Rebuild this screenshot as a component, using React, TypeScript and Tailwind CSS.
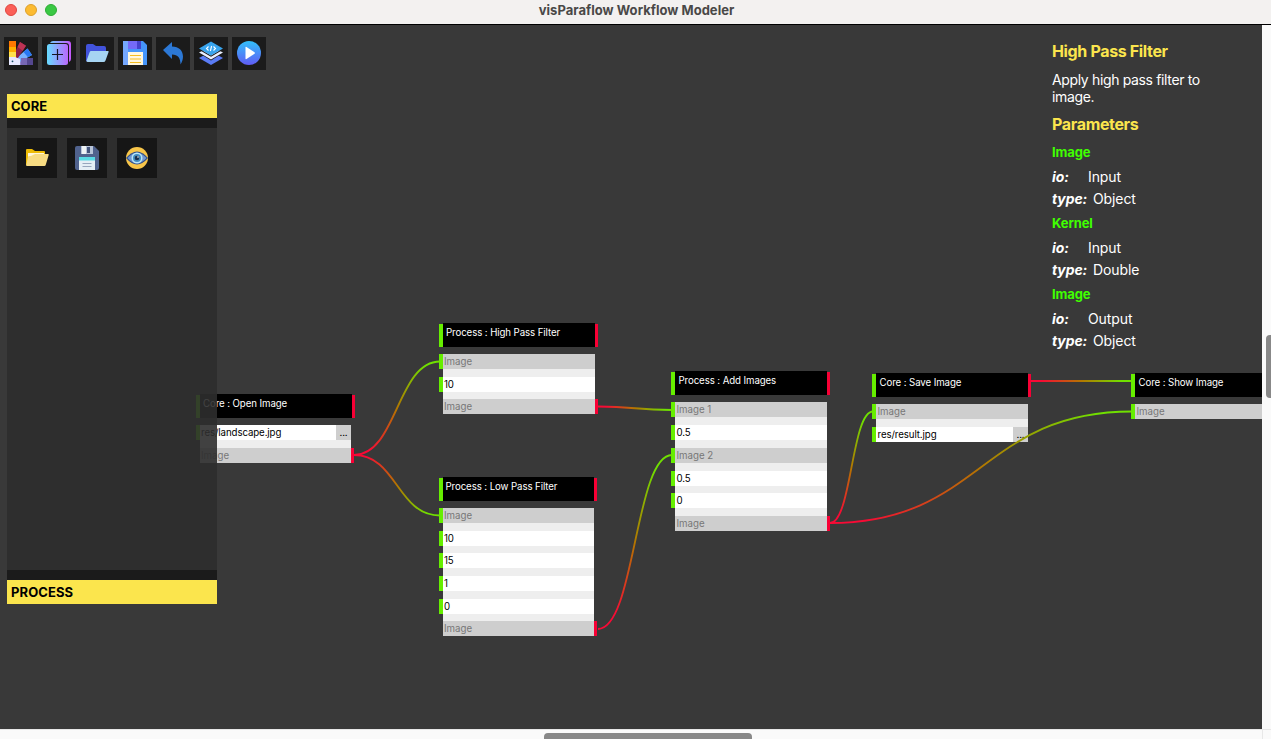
import type { ReactNode } from "react";

const CANVAS_TOP = 25;

type Row = { text: string; kind: "port" | "value" | "file"; left?: boolean; right?: boolean };
type FlowNode = {
  title: string;
  x: number;
  y: number;
  width: number;
  titleInset: number;
  textInset: number;
  headerExtra?: number;
  rowGap?: number;
  rows: Row[];
};

const port = (text: string, side: "left" | "right"): Row => ({
  text,
  kind: "port",
  left: side === "left",
  right: side === "right",
});
const value = (text: string): Row => ({ text, kind: "value", left: true });
const file = (text: string): Row => ({ text, kind: "file", left: true });

const nodes: FlowNode[] = [
  { title: "Core : Open Image", x: 200, y: 394, width: 151, titleInset: 3, textInset: 1, headerExtra: 1, rows: [file("res/landscape.jpg"), port("Image", "right")] },
  { title: "Process : High Pass Filter", x: 443, y: 323, width: 152, titleInset: 3, textInset: 1, rows: [port("Image", "left"), value("10"), port("Image", "right")] },
  { title: "Process : Low Pass Filter", x: 443, y: 477, width: 151, titleInset: 2.5, textInset: 1, rows: [port("Image", "left"), value("10"), value("15"), value("1"), value("0"), port("Image", "right")] },
  { title: "Process : Add Images", x: 675, y: 371, width: 152, titleInset: 3.5, textInset: 1.5, rowGap: 7.85, rows: [port("Image 1", "left"), value("0.5"), port("Image 2", "left"), value("0.5"), value("0"), port("Image", "right")] },
  { title: "Core : Save Image", x: 876, y: 373, width: 152, titleInset: 3.5, textInset: 1.5, rows: [port("Image", "left"), file("res/result.jpg")] },
  { title: "Core : Show Image", x: 1135, y: 373, width: 152, titleInset: 3.5, textInset: 1.5, rows: [port("Image", "left")] },
];

const edges: [number, number, number, number][] = [
  [354, 455, 440, 361.5],
  [354, 455, 440, 515.5],
  [598, 406.5, 672, 410],
  [598, 629, 672, 455],
  [830, 523, 873, 411.5],
  [830, 523, 1132, 411.5],
  [1031, 381, 1132, 381],
];

function NodeView({ node }: { node: FlowNode }) {
  return (
    <div className="absolute" style={{ left: node.x, top: node.y - CANVAS_TOP, width: node.width }}>
      <div
        className="relative h-6 bg-black text-[9.7px] leading-[20px] tracking-[-0.1px] text-white"
        style={{ paddingLeft: node.titleInset, width: node.width + (node.headerExtra ?? 0) }}
      >
        <span className="absolute -left-[4px] top-px h-[23px] w-[4px] bg-[#66ee00]" />
        <span className="whitespace-nowrap">{node.title}</span>
        <span className="absolute -right-[3px] top-px h-[23px] w-[3px] bg-[#f80035]" />
      </div>
      <div className="mt-[7px] flex flex-col bg-[#eeeeee]" style={{ gap: node.rowGap ?? 7.7 }}>
        {node.rows.map((row, i) => (
          <div
            key={i}
            className={
              row.kind === "port"
                ? "relative flex h-[15px] items-center bg-[#cecece] text-[9.7px] leading-[15px] text-[#777]"
                : "relative flex h-[15px] items-center bg-white text-[9.7px] leading-[15px] tracking-[-0.1px] text-black"
            }
            style={{ paddingLeft: node.textInset }}
          >
            {row.left && <span className="absolute -left-[4px] top-0 h-[15px] w-[4px] bg-[#66ee00]" />}
            <span className="whitespace-nowrap">{row.text}</span>
            {row.kind === "file" && (
              <span className="ml-auto h-[15px] w-[15px] bg-[#cecece] text-center leading-[15px]">...</span>
            )}
            {row.right && <span className="absolute -right-[3px] top-0 h-[15px] w-[3px] bg-[#f80035]" />}
          </div>
        ))}
      </div>
    </div>
  );
}

function Edges() {
  return (
    <svg className="absolute inset-0" width="1262" height="704" viewBox="0 25 1262 704" fill="none">
      <defs>
        {edges.map(([x1, y1, x2, y2], i) => (
          <linearGradient key={i} id={`edge${i}`} gradientUnits="userSpaceOnUse" x1={x1} y1={y1} x2={x2} y2={y2}>
            <stop offset="0.1" stopColor="#f80a35" />
            <stop offset="0.5" stopColor="#b37700" />
            <stop offset="0.9" stopColor="#70e000" />
          </linearGradient>
        ))}
      </defs>
      {edges.map(([x1, y1, x2, y2], i) => {
        const mid = (x1 + x2) / 2;
        return (
          <path key={i} d={`M${x1} ${y1}C${mid} ${y1} ${mid} ${y2} ${x2} ${y2}`} stroke={`url(#edge${i})`} strokeWidth="1.8" />
        );
      })}
    </svg>
  );
}

function Icon({ children, size = 24 }: { children: ReactNode; size?: number }) {
  return (
    <svg width={size} height={size} viewBox="0 0 24 24" fill="none">
      {children}
    </svg>
  );
}

const PaletteIcon = () => (
  <Icon>
    <path d="M0 17h24v7H0z" fill="#7767b5" />
    <path d="M17 17h7v7h-7z" fill="#54478f" />
    <path d="M11 17h6v7h-6z" fill="#9284cd" />
    <path d="M5 19 18.500 7.500 23 14 9 22z" fill="#75b0ff" />
    <path d="m14.500 11 4-3.500L23 14l-4 2.300z" fill="#2877f2" />
    <path d="M12 17h12v7H12z" fill="#7767b5" />
    <path d="M18 17h6v7h-6z" fill="#54478f" />
    <path d="M3 17 11 1l6 3.800L7 20z" fill="#8f2146" />
    <path d="m8.500 6 2.500-5 6 3.800-3.300 5z" fill="#bc3354" />
    <path d="M0 0h7v6H0z" fill="#ff7800" />
    <path d="M0 6h7v5H0z" fill="#ffb000" />
    <path d="M0 11h7v6H0z" fill="#ffe34d" />
    <path d="M0 16h6l5 2v6H0z" fill="#e7e9ff" />
    <circle cx="3.500" cy="20.300" r=".9" fill="#174e64" />
  </Icon>
);

const NewIcon = () => (
  <Icon>
    <defs>
      <linearGradient id="newFill" x1="0" y1="12" x2="24" y2="12" gradientUnits="userSpaceOnUse">
        <stop stopColor="#67dcff" />
        <stop offset="1" stopColor="#c557fb" />
      </linearGradient>
    </defs>
    <path d="M3 2Q4 0 6 0h15q3 0 3 3v15q0 2-2 3V5q0-3-3-3z" fill="url(#newFill)" />
    <rect y="3" width="21" height="21" rx="2.500" fill="url(#newFill)" />
    <path d="M10.500 8v11M5 13.500h11" stroke="#161522" strokeWidth="1.200" />
  </Icon>
);

const BlueFolderIcon = () => (
  <Icon>
    <path d="M1 20V5q0-2 2-2h5l3 2h8q2 0 2 2v8L4 21z" fill="#4253dc" />
    <path d="M6 10h17q1 0 .5 1.300l-3 8.200q-.5 1.500-2 1.500H3q-2 0-1.400-1.500l3-8.200Q5 10 6 10z" fill="#a6d4f2" />
  </Icon>
);

const SaveIcon = () => (
  <Icon>
    <path d="M0 0h20l4 4v20H0z" fill="#4595fa" />
    <path d="M0 0h5v24H0z" fill="#75a8ff" />
    <path d="M5 0h13v8H5z" fill="#4643ca" />
    <path d="M5 0h9v8H5z" fill="#746af6" />
    <path d="M5 11h15v13H5z" fill="#fff7df" />
    <path d="M7 14.500h11M7 18h11M7 21.500h11" stroke="#f5bd20" strokeWidth="1.100" />
  </Icon>
);

const UndoIcon = () => (
  <Icon>
    <path d="M2 9 11 1v4.500c10 0 14 9 8.500 18C19.500 17 17 13.500 11 13.500V18z" fill="#2c78d5" />
  </Icon>
);

const LayersIcon = () => (
  <Icon>
    <path d="m0 17 12-6.500L24 17l-12 7z" fill="#5a7cf5" />
    <path d="m0 12 12-6 12 6-12 7.500z" fill="#1b1b1b" />
    <path d="m0 11.500 12-6 12 6-12 7z" fill="#eaf0ff" />
    <path d="m0 7.500 12 7 12-7v1.200l-12 7-12-7z" fill="#1b1b1b" />
    <path d="m0 7.500 12-7 12 7-12 7z" fill="#38a4ed" />
    <path d="m9.500 5.500-2 2 2 2m5-4 2 2-2 2M12.600 5l-1.200 5" stroke="white" strokeWidth="1.100" />
  </Icon>
);

const PlayIcon = () => (
  <Icon>
    <defs>
      <linearGradient id="playFill" x1="12" y1="0" x2="12" y2="24" gradientUnits="userSpaceOnUse">
        <stop stopColor="#32c0fb" />
        <stop offset="1" stopColor="#615cf4" />
      </linearGradient>
    </defs>
    <circle cx="12" cy="12" r="12" fill="url(#playFill)" />
    <path d="M8.500 6.500q0-1 1-.5l8 5.300q1 .7 0 1.400l-8 5.300q-1 .5-1-.5z" fill="white" />
  </Icon>
);

const OpenImageIcon = () => (
  <Icon>
    <path d="M1 19V4q0-1 1-1h5l3 2h9q1 0 1 1v4L3 20z" fill="#edbb05" />
    <path d="M3 7h16v6H3z" fill="#fff6d8" />
    <path d="M6 10l4-2h13q1 0 .7 1l-3 10q-.3 1-1.300 1H2q-1 0-.8-1L3 11q.2-1 1.300-1z" fill="#f7db82" />
  </Icon>
);

const SaveImageIcon = () => (
  <Icon>
    <path d="M2 0h17l5 5v17q0 2-2 2H2q-2 0-2-2V2q0-2 2-2z" fill="#50628d" />
    <path d="M6 0h12v8H6z" fill="#b8c4d8" />
    <path d="M7 0h4v8H7z" fill="#edf2f5" />
    <path d="M12 1h3v6h-3z" fill="#43547c" />
    <path d="M4 11h16v13H4z" fill="#e4eef5" />
    <path d="M4 11h16v3.500H4z" fill="#57dae4" />
    <path d="M7.500 17.500h9M7.500 20.500h9" stroke="#97a6bd" strokeWidth="1" />
  </Icon>
);

const ShowImageIcon = () => (
  <Icon>
    <circle cx="12" cy="12" r="11" fill="#f8c64a" />
    <path d="M1 12Q12-1 23 12 12 25 1 12z" fill="#304f8a" />
    <path d="M2.500 12Q12 1.500 21.500 12 12 22.500 2.500 12z" fill="#7197d0" />
    <circle cx="12" cy="12" r="5.500" fill="#b9e7fa" />
    <circle cx="12" cy="12" r="4" fill="#438cc0" />
    <circle cx="12" cy="12" r="2.300" fill="#19304f" />
    <circle cx="13" cy="11" r=".8" fill="white" />
  </Icon>
);

const tools = [PaletteIcon, NewIcon, BlueFolderIcon, SaveIcon, UndoIcon, LayersIcon, PlayIcon];
const coreItems = [OpenImageIcon, SaveImageIcon, ShowImageIcon];
const parameters = [
  { name: "Image", io: "Input", type: "Object" },
  { name: "Kernel", io: "Input", type: "Double" },
  { name: "Image", io: "Output", type: "Object" },
];

function Toolbar() {
  return (
    <div className="flex gap-1 pl-1 pt-3">
      {tools.map((Tool, i) => (
        <button key={i} className="flex h-[33px] w-[34px] justify-center bg-[#1b1b1b] pt-1">
          <Tool />
        </button>
      ))}
    </div>
  );
}

function Sidebar() {
  return (
    <aside className="ml-[7px] mt-6 flex w-[210px] flex-col text-[13px] font-bold text-black">
      <h2 className="h-6 bg-[#fbe54d] pl-1 leading-[25px]">CORE</h2>
      <div className="flex h-[462px] items-start gap-2.5 border-y-[10px] border-[#1b1b1b] bg-[#2d2d2d]/90 bg-clip-padding p-2.5">
        {coreItems.map((Item, i) => (
          <button key={i} className="flex size-10 items-center justify-center bg-[#161616]">
            <Item />
          </button>
        ))}
      </div>
      <h2 className="h-6 bg-[#fbe54d] pl-1 leading-[25px] tracking-[0.1px]">PROCESS</h2>
    </aside>
  );
}

function InfoPanel() {
  return (
    <aside className="w-[210px] pr-8 pt-[14px] text-[14px] text-white">
      <h1 className="text-[16px] font-bold leading-6 tracking-[-0.35px] text-[#fbe54d]">High Pass Filter</h1>
      <p className="mt-2 leading-[17px] tracking-[-0.35px]">Apply high pass filter to image.</p>
      <h2 className="mt-[7px] text-[16px] font-bold leading-6 tracking-[-0.35px] text-[#fbe54d]">Parameters</h2>
      <div className="mt-[3px] flex flex-col tracking-[-0.1px]">
        {parameters.map((p, i) => (
          <section key={i}>
            <h3 className="text-[13px] font-bold leading-[27px]  text-[#40ff00]">{p.name}</h3>
            <div className="flex leading-[22px]">
              <span className="w-9 font-bold italic">io:</span>
              <span>{p.io}</span>
            </div>
            <div className="flex leading-[22px]">
              <span className="w-[41px] font-bold italic">type:</span>
              <span>{p.type}</span>
            </div>
          </section>
        ))}
      </div>
    </aside>
  );
}

export default function App() {
  return (
    <div className="flex h-[739px] w-[1271px] flex-col overflow-hidden bg-[#fafafa] font-[Inter,sans-serif]">
      <header className="grid h-[25px] shrink-0 grid-cols-[1fr_auto_1fr] border-b border-black bg-[#f3f1f0]">
        <div className="flex gap-2 pl-[5px] pt-1">
          <span className="size-3 rounded-full border border-[#df4640] bg-[#fb5f57]" />
          <span className="size-3 rounded-full border border-[#dda02b] bg-[#fcbb31]" />
          <span className="size-3 rounded-full border border-[#2eac35] bg-[#3ac843]" />
        </div>
        <h1 className="pl-[2px] text-[13px] font-bold leading-[20px] tracking-[0.03px] text-[#494847]">visParaflow Workflow Modeler</h1>
      </header>
      <div className="flex h-[704px] shrink-0">
        <main className="relative w-[1262px] overflow-hidden bg-[#393939]">
          {nodes.map((node) => (
            <NodeView key={node.title} node={node} />
          ))}
          <Edges />
          <div className="relative flex justify-between">
            <div>
              <Toolbar />
              <Sidebar />
            </div>
            <InfoPanel />
          </div>
        </main>
        <div className="flex w-[9px] justify-end pt-[310px]">
          <div className="h-[63px] w-[5px] rounded-l bg-[#888]" />
        </div>
      </div>
      <footer className="flex h-[10px] border-t border-[#e8e8e8] pl-[544px] pt-[3px]">
        <div className="h-[6px] w-52 rounded-t bg-[#888]" />
        <div className="-mt-[3px] ml-auto w-[9px] border-l border-[#e8e8e8]" />
      </footer>
    </div>
  );
}
